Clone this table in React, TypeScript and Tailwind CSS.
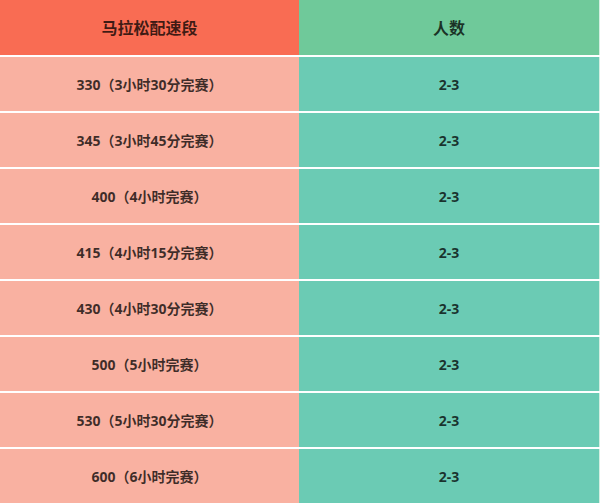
const rows = [
  "330（3小时30分完赛）",
  "345（3小时45分完赛）",
  "400（4小时完赛）",
  "415（4小时15分完赛）",
  "430（4小时30分完赛）",
  "500（5小时完赛）",
  "530（5小时30分完赛）",
  "600（6小时完赛）",
];

export default function App() {
  return (
    <div
      className="w-[600px] h-[503px] bg-white overflow-hidden flex flex-col gap-[2px] text-black/75 font-bold"
      style={{ fontFamily: '"Open Sans", "Noto Sans CJK SC", sans-serif' }}
    >
      <div className="grid grid-cols-[299px_301px] h-[55px] text-[16px]">
        <div className="bg-[#f96c53] flex items-center justify-center">马拉松配速段</div>
        <div className="bg-[#6fc99a] border-r border-[#d4efe2] flex items-center justify-center">人数</div>
      </div>
      {rows.map((r) => (
        <div key={r} className="grid grid-cols-[299px_301px] h-[54px] text-[14px]">
          <div className="bg-[#f9b1a1] flex items-center justify-center">{r}</div>
          <div className="bg-[#6bcbb4] border-r border-[#d4efe2] flex items-center justify-center">2-3</div>
        </div>
      ))}
    </div>
  );
}
